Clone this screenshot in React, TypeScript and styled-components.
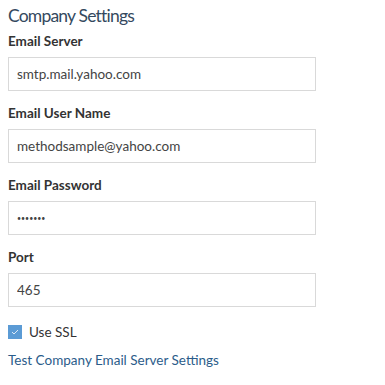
import React, { useState } from 'react';
import styled, { createGlobalStyle } from 'styled-components';

const GlobalStyle = createGlobalStyle`
  body {
    margin: 0;
    background: #fff;
    font-family: Lato, "Open Sans", sans-serif;
  }
`;

const SettingsWrapper = styled.form`
  display: flex;
  flex-direction: column;
  align-items: flex-start;
  padding: 2px 8px 0 8px;
  width: 308px;
`;

const SettingsHeader = styled.h2`
  margin: 0 0 2px 0;
  font-size: 17.5px;
  line-height: 27px;
  font-weight: 400;
  letter-spacing: -0.8px;
  color: #34495e;
`;

const FieldLabel = styled.label`
  font-size: 13.5px;
  line-height: 20px;
  font-weight: 700;
  color: #333;
  margin-bottom: 6px;
`;

type InputProps = {
  readonly masked?: boolean,
};

const FieldInput = styled.input<InputProps>`
  box-sizing: border-box;
  width: 308px;
  height: 34px;
  margin: 0 0 12px 0;
  padding: 0 8px;
  border: 1px solid #d9d9d9;
  border-radius: 0;
  font-family: inherit;
  font-size: ${(props) => (props.masked ? '7px' : '13.5px')};
  color: #444;
  background: #fff;
  outline: none;
`;

const CheckRow = styled.label`
  display: flex;
  align-items: center;
  gap: 7px;
  margin-top: 3px;
  height: 20px;
  font-size: 13.5px;
  color: #333;
  cursor: pointer;
`;

const CheckBox = styled.span<{ checked: boolean }>`
  display: flex;
  align-items: center;
  justify-content: center;
  width: 14px;
  height: 14px;
  background: ${(props) => (props.checked ? '#5b9bd5' : '#fff')};
  border: ${(props) => (props.checked ? 'none' : '1px solid #ccc')};
`;

const TestLink = styled.a`
  margin-top: 8px;
  font-size: 13.5px;
  line-height: 20px;
  color: #2b5c8a;
  text-decoration: none;
`;

function App() {
  const [useSsl, setUseSsl] = useState<boolean>(true);

  const fields = [
    { id: 'server', label: 'Email Server', value: 'smtp.mail.yahoo.com', type: 'text' },
    { id: 'user', label: 'Email User Name', value: 'methodsample@yahoo.com', type: 'text' },
    { id: 'password', label: 'Email Password', value: 'abcdefg', type: 'password' },
    { id: 'port', label: 'Port', value: '465', type: 'text' },
  ];

  return (
    <>
      <GlobalStyle />
      <SettingsWrapper onSubmit={(event) => event.preventDefault()}>
        <SettingsHeader>Company Settings</SettingsHeader>
        {
          fields.map((field) => (
            <React.Fragment key={field.id}>
              <FieldLabel htmlFor={field.id}>{field.label}</FieldLabel>
              <FieldInput
                id={field.id}
                type={field.type}
                masked={field.type === 'password'}
                defaultValue={field.value}
              />
            </React.Fragment>
          ))
        }
        <CheckRow onClick={() => setUseSsl(!useSsl)}>
          <CheckBox checked={useSsl}>
            {useSsl && (
              <svg width="8" height="6" viewBox="0 0 8 6">
                <path d="M1 3 L3 5 L7 1" stroke="#dce9f6" strokeWidth="1" fill="none" />
              </svg>
            )}
          </CheckBox>
          Use SSL
        </CheckRow>
        <TestLink href="#">Test Company Email Server Settings</TestLink>
      </SettingsWrapper>
    </>
  );
}

export default App;
